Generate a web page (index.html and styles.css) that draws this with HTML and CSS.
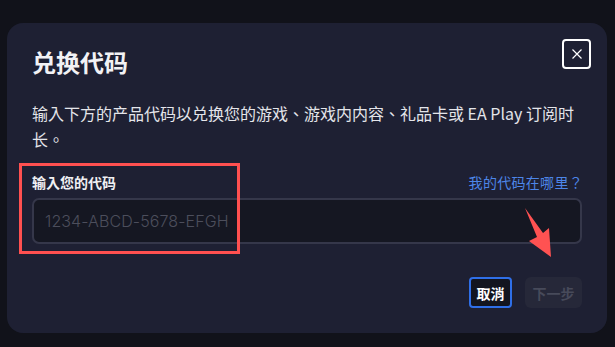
FILE: index.html
```html
<!DOCTYPE html>
<html lang="zh-TW">
<head>
<meta charset="utf-8">
<link rel="stylesheet" href="styles.css">
</head>
<body>
<div class="modal">
  <div class="head">
    <h1 class="title">兑换代码</h1>
    <button class="close" aria-label="关闭">
      <svg width="12" height="12" viewBox="0 0 12 12"><path d="M1.5 1.5 L10.5 10.5 M10.5 1.5 L1.5 10.5" stroke="#fff" stroke-width="1.2" fill="none"/></svg>
    </button>
  </div>
  <p class="desc">输入下方的产品代码以兑换您的游戏、游戏内内容、礼品卡或 EA Play 订阅时长。</p>
  <div class="field-row">
    <label class="label">输入您的代码</label>
    <a class="link">我的代码在哪里？</a>
  </div>
  <div class="input">1234-ABCD-5678-EFGH</div>
  <div class="actions">
    <button class="btn cancel">取消</button>
    <button class="btn next">下一步</button>
  </div>
  <div class="annot-box"></div>
  <svg class="annot-arrow" width="40" height="60" viewBox="0 0 40 60"><polygon points="2,1 20,26 26,21 28,50 6,34 14,30" fill="#ff5252"/></svg>
</div>
</body>
</html>
```
FILE: styles.css
```css
html, body { margin: 0; padding: 0; }
body {
  width: 615px; height: 347px; overflow: hidden;
  background: #11121a;
  font-family: "Noto Sans CJK TC", "Noto Sans", sans-serif;
  padding: 23px 0 0 7px;
  box-sizing: border-box;
}
.modal {
  position: relative;
  width: 600px;
  height: 310px;
  box-sizing: border-box;
  background: #1e2033;
  border-radius: 16px;
  padding: 24px 25px 25px 25px;
}
.head { display: flex; justify-content: space-between; align-items: flex-start; height: 30px; }
.title { margin: 0; font-size: 24px; line-height: 30px; font-weight: 700; color: #f2f2f5; }
.close {
  width: 29px; height: 30px; margin-top: -8px; margin-right: -9px;
  border: 2px solid #fff; border-radius: 4px; background: transparent;
  display: flex; align-items: center; justify-content: center; padding: 0;
}
.desc {
  margin: 23px 0 0; font-size: 16px; line-height: 26px; color: #e4e5ea;
}
.field-row { display: flex; justify-content: space-between; align-items: baseline; margin-top: 20px; height: 20px; line-height: 20px; }
.label { font-size: 14px; font-weight: 700; color: #f0f0f3; }
.link { font-size: 14px; color: #4d86e8; margin-right: -1px; letter-spacing: 0.3px; }
.input {
  margin-top: 6px; height: 46px; box-sizing: border-box;
  border: 2px solid #35374a; border-radius: 7px; background: #151722;
  padding: 0 11px; display: flex; align-items: center;
  font-family: "Inter", "Noto Sans", sans-serif; font-size: 16px; font-weight: 300; color: #4c4e5c;
  letter-spacing: 0.1px;
}
.actions { display: flex; justify-content: flex-end; gap: 13px; margin-top: 33px; }
.btn {
  height: 31px; box-sizing: border-box; font-family: inherit; font-size: 14px; font-weight: 700;
  padding: 0; display: flex; align-items: center; justify-content: center;
}
.cancel { width: 43px; border: 2px solid #2f6fe8; border-radius: 4px; background: #13151f; color: #fff; }
.next { width: 57px; border: none; border-radius: 6px; background: #262839; color: #474a5a; }
.annot-box {
  position: absolute; left: 12px; top: 140px; width: 221px; height: 91px;
  box-sizing: border-box; border: 3px solid #ff5050;
}
.annot-arrow { position: absolute; left: 516px; top: 184px; }
```
